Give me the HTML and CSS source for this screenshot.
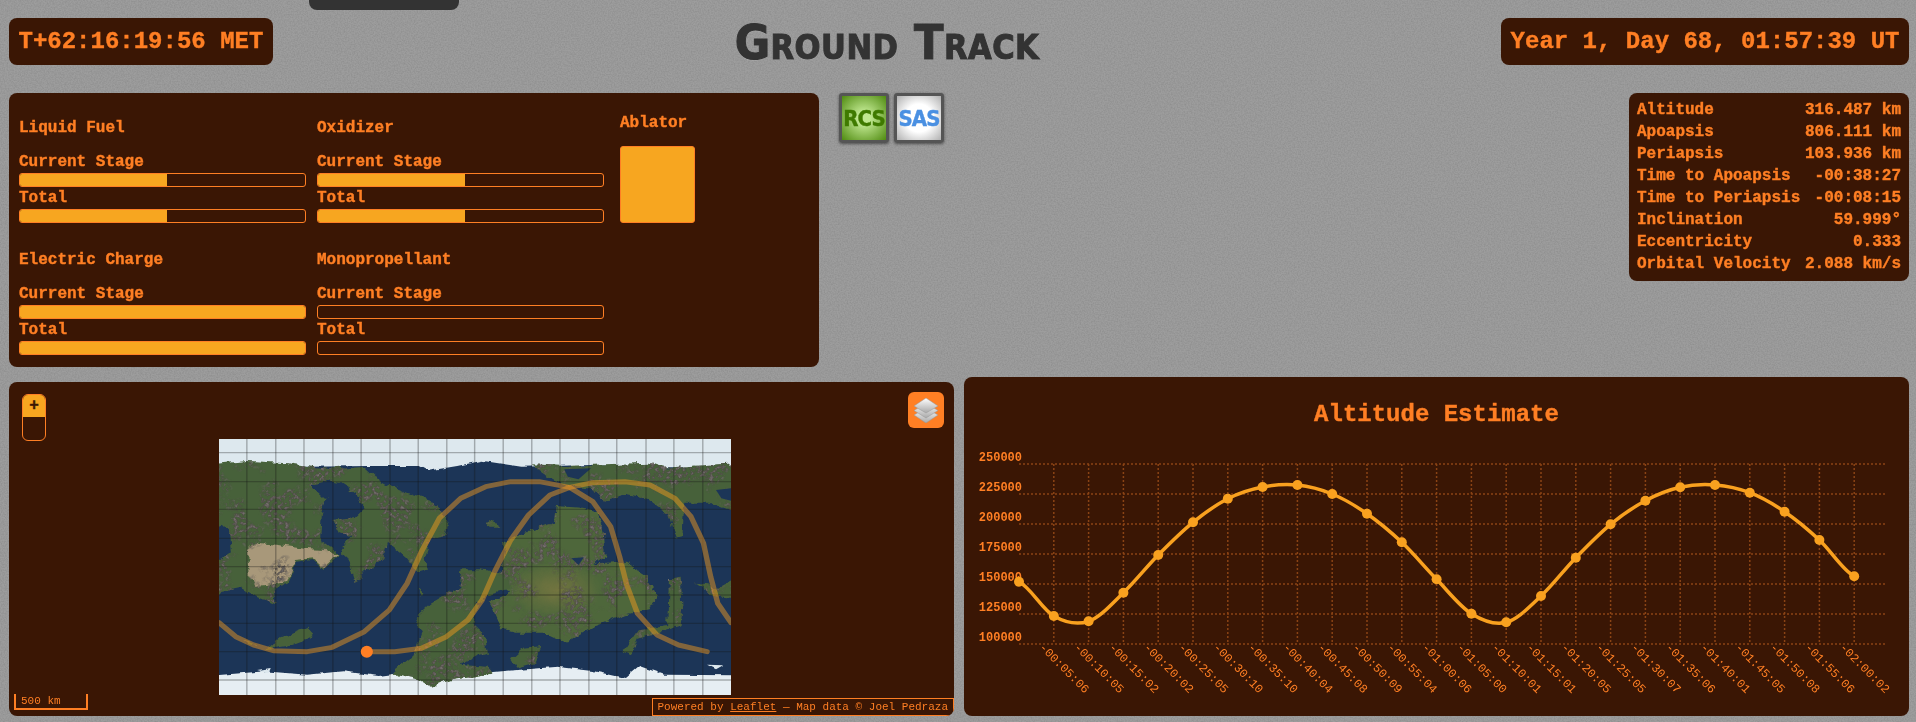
FILE: index.html
```html
<!DOCTYPE html>
<html lang="en">
<head>
    <meta charset="UTF-8">
    <title>Ground Track</title>
    <link rel="stylesheet" href="styles.css">
</head>
<body>

    <!-- speckled backdrop -->
    <svg class="paper" width="1916" height="722">
        <filter id="paperGrain" x="0" y="0" width="100%" height="100%" color-interpolation-filters="sRGB">
            <feTurbulence type="fractalNoise" baseFrequency="0.7" numOctaves="2" seed="3"/>
            <feColorMatrix type="matrix" values="0 0 0 0 0.45  0 0 0 0 0.45  0 0 0 0 0.45  0 0 0 0.6 -0.2"/>
        </filter>
        <rect width="1916" height="722" filter="url(#paperGrain)"/>
    </svg>

    <div class="nav-tab">Panels</div>

    <div class="page">

        <div class="top-bar">
            <div class="clock">T+62:16:19:56 MET</div>
            <h1 class="page-title">Ground Track</h1>
            <div class="clock">Year 1, Day 68, 01:57:39 UT</div>
        </div>

        <div class="mid-row">
            <div class="panel resources">
                <div class="resource-grid">
                    <div class="resource">
                        <div class="resource-name">Liquid Fuel</div>
                        <div class="bar-label">Current Stage</div>
                        <div class="bar"><div class="bar-fill half"></div></div>
                        <div class="bar-label">Total</div>
                        <div class="bar"><div class="bar-fill half"></div></div>
                    </div>
                    <div class="resource">
                        <div class="resource-name">Oxidizer</div>
                        <div class="bar-label">Current Stage</div>
                        <div class="bar"><div class="bar-fill half"></div></div>
                        <div class="bar-label">Total</div>
                        <div class="bar"><div class="bar-fill half"></div></div>
                    </div>
                    <div class="resource">
                        <div class="resource-name">Electric Charge</div>
                        <div class="bar-label">Current Stage</div>
                        <div class="bar"><div class="bar-fill full"></div></div>
                        <div class="bar-label">Total</div>
                        <div class="bar"><div class="bar-fill full"></div></div>
                    </div>
                    <div class="resource">
                        <div class="resource-name">Monopropellant</div>
                        <div class="bar-label">Current Stage</div>
                        <div class="bar"></div>
                        <div class="bar-label">Total</div>
                        <div class="bar"></div>
                    </div>
                </div>
                <div class="ablator">
                    <div class="resource-name">Ablator</div>
                    <div class="ablator-tank"></div>
                </div>
            </div>

            <div class="toggles">
                <div class="toggle toggle-rcs">RCS</div>
                <div class="toggle toggle-sas">SAS</div>
            </div>

            <table class="panel orbit-info">
                <tr><td>Altitude</td><td>316.487 km</td></tr>
                <tr><td>Apoapsis</td><td>806.111 km</td></tr>
                <tr><td>Periapsis</td><td>103.936 km</td></tr>
                <tr><td>Time to Apoapsis</td><td>-00:38:27</td></tr>
                <tr><td>Time to Periapsis</td><td>-00:08:15</td></tr>
                <tr><td>Inclination</td><td>59.999°</td></tr>
                <tr><td>Eccentricity</td><td>0.333</td></tr>
                <tr><td>Orbital Velocity</td><td>2.088 km/s</td></tr>
            </table>
        </div>

        <div class="bottom-row">
            <div class="panel map-panel">
                <!-- viewBox is in the units the track was traced in -->
                <svg class="map-image" viewBox="53 27 1434 768" preserveAspectRatio="none">
                    <defs>
                        <filter id="landTexture" x="-5%" y="-5%" width="110%" height="110%" color-interpolation-filters="sRGB">
                            <feTurbulence type="fractalNoise" baseFrequency="0.035" numOctaves="4" seed="4" result="coast"/>
                            <feDisplacementMap in="SourceGraphic" in2="coast" scale="22" xChannelSelector="R" yChannelSelector="G" result="rough"/>
                            <!-- mountains: fine noise, only where the coarse noise allows it -->
                            <feTurbulence type="fractalNoise" baseFrequency="0.012" numOctaves="3" seed="21" result="coarse"/>
                            <feColorMatrix in="coarse" type="matrix" values="0 0 0 0 0  0 0 0 0 0  0 0 0 0 0  7 0 0 0 -3.300" result="ranges"/>
                            <feTurbulence type="fractalNoise" baseFrequency="0.09" numOctaves="3" seed="9" result="fine"/>
                            <feColorMatrix in="fine" type="matrix" values="0.5 0 0 0 0.05  0.5 0 0 0 0.03  0.5 0 0 0 0.02  5 0 0 0 -2.100" result="peaks"/>
                            <feComposite in="peaks" in2="ranges" operator="in" result="mountains"/>
                            <feComposite in="mountains" in2="rough" operator="in" result="landMountains"/>
                            <feMerge>
                                <feMergeNode in="rough"/>
                                <feMergeNode in="landMountains"/>
                            </feMerge>
                        </filter>
                        <filter id="iceEdge" x="-5%" y="-5%" width="110%" height="110%">
                            <feTurbulence type="fractalNoise" baseFrequency="0.03" numOctaves="3" seed="2" result="edge"/>
                            <feDisplacementMap in="SourceGraphic" in2="edge" scale="12" xChannelSelector="R" yChannelSelector="G"/>
                        </filter>
                        <radialGradient id="oliveHeart">
                            <stop offset="0" stop-color="#777640" stop-opacity="0.9"/>
                            <stop offset="1" stop-color="#777640" stop-opacity="0"/>
                        </radialGradient>
                    </defs>

                    <rect class="ocean" x="53" y="27" width="1434" height="768"/>

                    <g filter="url(#iceEdge)">
                        <path class="ice" d="M20 0H1520V115H1290L1100 105L900 110L790 92L720 108L640 122L615 108L470 108L300 110L20 105Z"/>
                        <path class="ice ice-south" d="M20 738L180 724L300 734L400 724L500 738L600 724L800 728L1000 710L1100 723L1190 744L1230 708L1300 734L1520 736V820H20Z"/>
                        <path class="ice" d="M1420 704L1465 706L1445 718Z"/>
                        <path class="ice" d="M160 720L195 714L190 728Z"/>
                    </g>

                    <g filter="url(#landTexture)" transform="translate(6 8)">
                        <!-- north west continent -->
                        <path class="land" d="M20 95L130 85L240 92L350 108L450 100L480 130L520 155L590 185L650 205L690 270L680 310L640 320L620 380L635 410L600 420L570 375L520 330L510 380L450 420L430 450L415 400L390 350L420 310L380 295L365 265L430 255L455 230L440 190L385 150L340 145L300 155L345 200L335 250L330 320L385 365L340 415L310 385L260 390L245 450L200 465L205 515L150 490L110 465L20 485L20 400L80 360L75 290L20 260Z"/>
                        <path class="desert" d="M125 345L160 330L230 340L300 350L345 352L380 365L340 410L310 380L260 385L240 445L200 455L150 460L130 420Z"/>
                        <!-- centre continent -->
                        <path class="land land-light" d="M840 330L900 300L985 270L990 220L1060 225L1110 235L1125 300L1130 370L1095 395L1190 390L1240 425L1275 490L1250 530L1190 545L1100 580L1020 630L960 600L880 600L840 590L805 510L860 480L840 470L840 400L850 350Z"/>
                        <ellipse cx="990" cy="470" rx="130" ry="80" fill="url(#oliveHeart)"/>
                        <!-- south continent -->
                        <path class="land" d="M600 550L640 510L720 460L730 410L780 410L860 425L860 470L810 485L770 510L760 570L790 600L800 660L770 670L720 700L800 705L810 720L700 740L640 765L600 740L530 720L590 670L615 600L595 555Z"/>
                        <!-- north east -->
                        <path class="land" d="M920 95L1020 100L1130 95L1250 90L1290 105L1520 90V250L1420 210L1350 210L1345 310L1325 315L1305 245L1250 200L1180 185L1125 210L1100 170L1020 160L970 130Z"/>
                        <!-- islands -->
                        <path class="land" d="M180 650L215 620L260 600L295 585L312 605L290 620L240 640Z"/>
                        <path class="land" d="M115 622L160 640L130 635Z"/>
                        <path class="land" d="M865 680L900 645L950 640L930 690L880 705Z"/>
                        <path class="land" d="M795 270L815 258L835 285L810 285Z"/>
                        <path class="land" d="M605 470L625 485L620 495Z"/>
                        <path class="land" d="M1380 450L1420 455L1440 470L1520 420V500L1430 490Z"/>
                        <path class="land" d="M1310 440L1340 435L1345 520L1340 580L1280 600L1220 620L1200 670L1175 660L1220 590L1305 580Z"/>
                    </g>
                    <path class="ocean" d="M1020 118L1095 115L1060 148L1030 140Z"/>
                    <path class="ocean" d="M1445 180L1487 175V212L1460 205Z"/>
                    <path class="ocean" d="M1040 385L1075 382L1060 405Z"/>

                    <path class="graticule" d="M131 27V795M212 27V795M291 27V795M372 27V795M451 27V795M532 27V795M611 27V795M691 27V795M769 27V795M849 27V795M929 27V795M1008 27V795M1089 27V795M1167 27V795M1249 27V795M1327 27V795M1408 27V795"/>
                    <path class="graticule" d="M53 68H1487M53 155H1487M53 238H1487M53 325H1487M53 410H1487M53 495H1487M53 580H1487M53 665H1487M53 750H1487"/>

                    <polyline class="track" points="467,665 545,665 620,655 690,620 750,570 790,510 825,425 870,330 920,255 980,195 1035,172 1100,158 1190,155 1260,165 1330,205 1375,260 1410,340 1430,440 1450,520 1487,578"/>
                    <polyline class="track" points="53,578 100,620 150,645 205,662 300,665 370,652 460,605 530,540 580,460 620,365 670,265 730,205 800,170 870,155 950,155 1035,172 1100,215 1150,290 1175,380 1195,465 1225,550 1280,615 1340,645 1420,665"/>
                    <ellipse class="vessel" cx="467" cy="665" rx="17" ry="18"/>
                </svg>

                <div class="zoom-control">
                    <div class="zoom-in">+</div>
                    <div class="zoom-out"></div>
                </div>

                <div class="layers-button">
                    <svg width="24" height="25" viewBox="0 0 24 25">
                        <defs>
                            <linearGradient id="layerFill" x1="0" y1="0" x2="0" y2="1">
                                <stop offset="0" stop-color="#ffffff"/>
                                <stop offset="1" stop-color="#a8a8a8"/>
                            </linearGradient>
                        </defs>
                        <path class="layer-sheet" d="M12 10L24 17L12 25L0 17Z"/>
                        <path class="layer-sheet" d="M12 5L24 12.500L12 20L0 12.500Z"/>
                        <path class="layer-sheet" d="M12 0L24 8L12 15L0 8Z"/>
                    </svg>
                </div>

                <div class="map-scale">500 km</div>
                <div class="attribution">Powered by <a href="#">Leaflet</a> — Map data © Joel Pedraza</div>
            </div>

            <div class="panel chart-panel">
                <h2 class="chart-title">Altitude Estimate</h2>
                <svg id="altitudeChart" class="chart" width="945" height="287"></svg>
            </div>
        </div>

    </div>

    <script src="chart.js"></script>
</body>
</html>
```

FILE: styles.css
```css
body {
    margin: 0;
    height: 722px;
    overflow: hidden;
    background-color: #9d9d9d;
    font-family: "Liberation Mono", monospace;
    font-weight: bold;
    color: #ff7f24;
    -webkit-text-stroke: 0.4px #ff7f24;
}

.paper {
    position: fixed;
    top: 0;
    left: 0;
    z-index: -1;
}

.page {
    padding: 18px 7px 0 9px;
}

.panel {
    background-color: #3a1604;
    border-radius: 8px;
}

/* the menu tab hangs off the top of the window */
.nav-tab {
    position: absolute;
    top: -17px;
    left: 309px;
    width: 150px;
    height: 27px;
    background-color: #333;
    border-radius: 0 0 8px 8px;
    color: #fff;
    -webkit-text-stroke: 0;
    font-size: 15px;
    line-height: 27px;
    text-align: center;
    box-sizing: border-box;
    padding-bottom: 5px;
}

.top-bar {
    display: flex;
    justify-content: space-between;
    align-items: flex-start;
    height: 47px;
    margin-bottom: 28px;
}

.clock {
    height: 47px;
    line-height: 47px;
    padding: 0 9.500px;
    background-color: #3a1604;
    border-radius: 8px;
    font-size: 24px;
}

.page-title {
    margin: 0;
    color: #333;
    font-family: "DejaVu Sans", sans-serif;
    font-size: 48px;
    font-stretch: condensed;
    font-variant: small-caps;
    font-weight: bold;
    line-height: 48px;
    letter-spacing: 0.5px;
    -webkit-text-stroke: 1px #333;
    text-shadow: 0 1px 1px rgba(255, 255, 255, 0.2);
}

.mid-row {
    display: flex;
    align-items: flex-start;
}

.resources {
    display: flex;
    width: 810px;
    height: 274px;
    box-sizing: border-box;
    padding: 0 10px;
    font-size: 16px;
}

.resource-grid {
    display: grid;
    grid-template-columns: 287px 287px;
    column-gap: 11px;
    align-content: start;
}

.resource-name {
    margin-top: 26px;
    height: 18px;
    line-height: 18px;
}
.resource:nth-child(n+3) .resource-name {
    margin-top: 28px;
}

.bar-label {
    height: 22px;
    line-height: 22px;
}
.resource-name + .bar-label {
    margin-top: 14px;
}

.bar {
    height: 14px;
    box-sizing: border-box;
    border: 1px solid #ff7f24;
    border-radius: 3px;
    overflow: hidden;
    -webkit-text-stroke: 0;
}
.bar-fill {
    height: 100%;
    background-color: #f7a620;
}
.bar-fill.half { width: 51.5%; }
.bar-fill.full { width: 100%; }

.ablator {
    margin-left: 16px;
}
.ablator .resource-name {
    margin-top: 21px;
}
.ablator-tank {
    width: 75px;
    height: 77px;
    margin-top: 14px;
    box-sizing: border-box;
    border: 1px solid #ff7f24;
    border-radius: 3px;
    background-color: #f7a620;
}

.toggles {
    display: flex;
    gap: 5px;
    margin-left: 20px;
}

.toggle {
    width: 50px;
    height: 50px;
    box-sizing: border-box;
    border: 3px solid #555;
    border-radius: 3px;
    box-shadow: 0 1px 3px rgba(0, 0, 0, 0.5);
    font-family: "DejaVu Sans", sans-serif;
    font-size: 22px;
    font-stretch: condensed;
    line-height: 46px;
    text-align: center;
    letter-spacing: -1px;
}
.toggle-rcs {
    background: radial-gradient(circle, #c0e890 20%, #4f8a10 100%);
    color: #3f7a00;
    -webkit-text-stroke: 0.4px #3f7a00;
}
.toggle-sas {
    background: radial-gradient(circle, #fff 45%, #b0b0b0 100%);
    color: #4a90e2;
    -webkit-text-stroke: 0.4px #4a90e2;
}

.orbit-info {
    margin-left: auto;
    width: 280px;
    height: 188px;
    box-sizing: border-box;
    padding: 6px 8px;
    border-spacing: 0;
    font-size: 16px;
}
.orbit-info td {
    height: 22px;
    padding: 0;
    white-space: nowrap;
}
.orbit-info td:last-child {
    text-align: right;
}

.bottom-row {
    display: flex;
    align-items: flex-end;
    gap: 10px;
    margin-top: 10px;
}

.map-panel {
    position: relative;
    width: 945px;
    height: 334px;
    overflow: hidden;
}

.map-image {
    position: absolute;
    top: 57px;
    left: 210px;
    width: 512px;
    height: 256px;
}

.ocean { fill: #1c3557; }
.ice { fill: #dde8ee; }
.ice-south { fill: #e6eef3; }
.land { fill: #47613a; }
.land-light { fill: #4e673b; }
.desert { fill: #a8987a; }
.graticule {
    fill: none;
    stroke: rgba(20, 20, 20, 0.3);
    stroke-width: 4;
}
.track {
    fill: none;
    stroke: #ff9f1c;
    stroke-opacity: 0.45;
    stroke-width: 15;
    stroke-linecap: round;
    stroke-linejoin: round;
}
.vessel { fill: #ff7f24; }

.zoom-control {
    position: absolute;
    top: 12px;
    left: 13px;
    width: 24px;
    height: 47px;
    box-sizing: border-box;
    border: 1px solid #ff7f24;
    border-radius: 6px;
    overflow: hidden;
}
.zoom-in {
    height: 22px;
    background-color: #f7a620;
    color: #3a1604;
    -webkit-text-stroke: 0.4px #3a1604;
    font-size: 16px;
    line-height: 22px;
    text-align: center;
}

.layers-button {
    position: absolute;
    top: 10px;
    right: 10px;
    display: flex;
    align-items: center;
    justify-content: center;
    width: 36px;
    height: 36px;
    background-color: #ff7f24;
    border-radius: 6px;
}
.layer-sheet {
    fill: url(#layerFill);
    stroke: #999;
    stroke-width: 0.5;
}

.map-scale {
    position: absolute;
    left: 5px;
    bottom: 6px;
    width: 74px;
    height: 16px;
    box-sizing: border-box;
    border: 2px solid #ff7f24;
    border-top: 0;
    padding-left: 5px;
    font-size: 11px;
    font-weight: normal;
    line-height: 14px;
    -webkit-text-stroke: 0;
}

.attribution {
    position: absolute;
    right: 0;
    bottom: 0;
    height: 18px;
    box-sizing: border-box;
    border: 1px solid #ff7f24;
    padding: 0 5px;
    font-size: 11px;
    font-weight: normal;
    line-height: 16px;
    white-space: nowrap;
    -webkit-text-stroke: 0;
}
.attribution a {
    color: #ff7f24;
}

.chart-panel {
    width: 945px;
    height: 339px;
}

.chart-title {
    margin: 0;
    padding-top: 24px;
    font-size: 24px;
    line-height: 28px;
    text-align: center;
}

.chart {
    display: block;
}
.chart .grid-line {
    stroke: #8a4314;
    stroke-width: 1.500;
    stroke-dasharray: 2 2;
}
.chart .axis-y {
    fill: #ff7f24;
    font-size: 12px;
    font-weight: bold;
    text-anchor: end;
    -webkit-text-stroke: 0.2px #ff7f24;
}
.chart .axis-x {
    fill: #ff7f24;
    font-size: 12px;
    font-weight: normal;
    -webkit-text-stroke: 0.2px #ff7f24;
}
.chart .series {
    fill: none;
    stroke: #f9a11f;
    stroke-width: 3.500;
}
.chart .point {
    fill: #f9a11f;
}
```

FILE: chart.js
```js
// Altitude estimate chart, drawn into the svg on load
const svgNs = 'http://www.w3.org/2000/svg';
const chart = document.getElementById('altitudeChart');

const altitudes = [
    151917, 123333, 118917, 142750, 174167, 201417, 221083, 230833, 232500,
    225000, 208583, 184750, 153917, 125250, 118083, 140000, 171917, 199750,
    219417, 230583, 232500, 226083, 210250, 186667, 156417
];
const times = [
    '-00:05:06', '-00:10:05', '-00:15:02', '-00:20:02', '-00:25:05', '-00:30:10',
    '-00:35:10', '-00:40:04', '-00:45:08', '-00:50:09', '-00:55:04', '-01:00:06',
    '-01:05:00', '-01:10:01', '-01:15:01', '-01:20:05', '-01:25:05', '-01:30:07',
    '-01:35:06', '-01:40:01', '-01:45:05', '-01:50:08', '-01:55:06', '-02:00:02'
];

// Plot area inside the svg
const left = 55;
const right = 923;
const top0 = 35;
const bottom = 215;
const step = 34.8;

function xAt(i) {
    return left + i * step;
}
function yAt(value) {
    return bottom - (value - 100000) / 150000 * (bottom - top0);
}

function add(tag, attrs, text) {
    const el = document.createElementNS(svgNs, tag);
    for (const name in attrs) {
        el.setAttribute(name, attrs[name]);
    }
    if (text) {
        el.textContent = text;
    }
    chart.appendChild(el);
    return el;
}

// Horizontal grid and y labels
for (let value = 100000; value <= 250000; value += 25000) {
    const y = yAt(value);
    add('line', { class: 'grid-line', x1: left, x2: right, y1: y, y2: y });
    add('text', { class: 'axis-y', x: 58, y: y - 3 }, String(value));
}

// Vertical grid and rotated time labels
times.forEach((time, i) => {
    const x = xAt(i + 1);
    add('line', { class: 'grid-line', x1: x, x2: x, y1: top0, y2: bottom });
    add('text', { class: 'axis-x', transform: `translate(${x - 15} 219) rotate(45)` }, time);
});

// Smooth line through the points
let d = `M${xAt(0)} ${yAt(altitudes[0])}`;
for (let i = 0; i < altitudes.length - 1; i++) {
    const before = yAt(altitudes[Math.max(i - 1, 0)]);
    const from = yAt(altitudes[i]);
    const to = yAt(altitudes[i + 1]);
    const after = yAt(altitudes[Math.min(i + 2, altitudes.length - 1)]);
    const c1 = from + (to - before) / 6;
    const c2 = to - (after - from) / 6;
    d += `C${xAt(i) + step / 3} ${c1} ${xAt(i + 1) - step / 3} ${c2} ${xAt(i + 1)} ${to}`;
}
add('path', { class: 'series', d: d });

altitudes.forEach((value, i) => {
    add('circle', { class: 'point', cx: xAt(i), cy: yAt(value), r: 5 });
});
```
